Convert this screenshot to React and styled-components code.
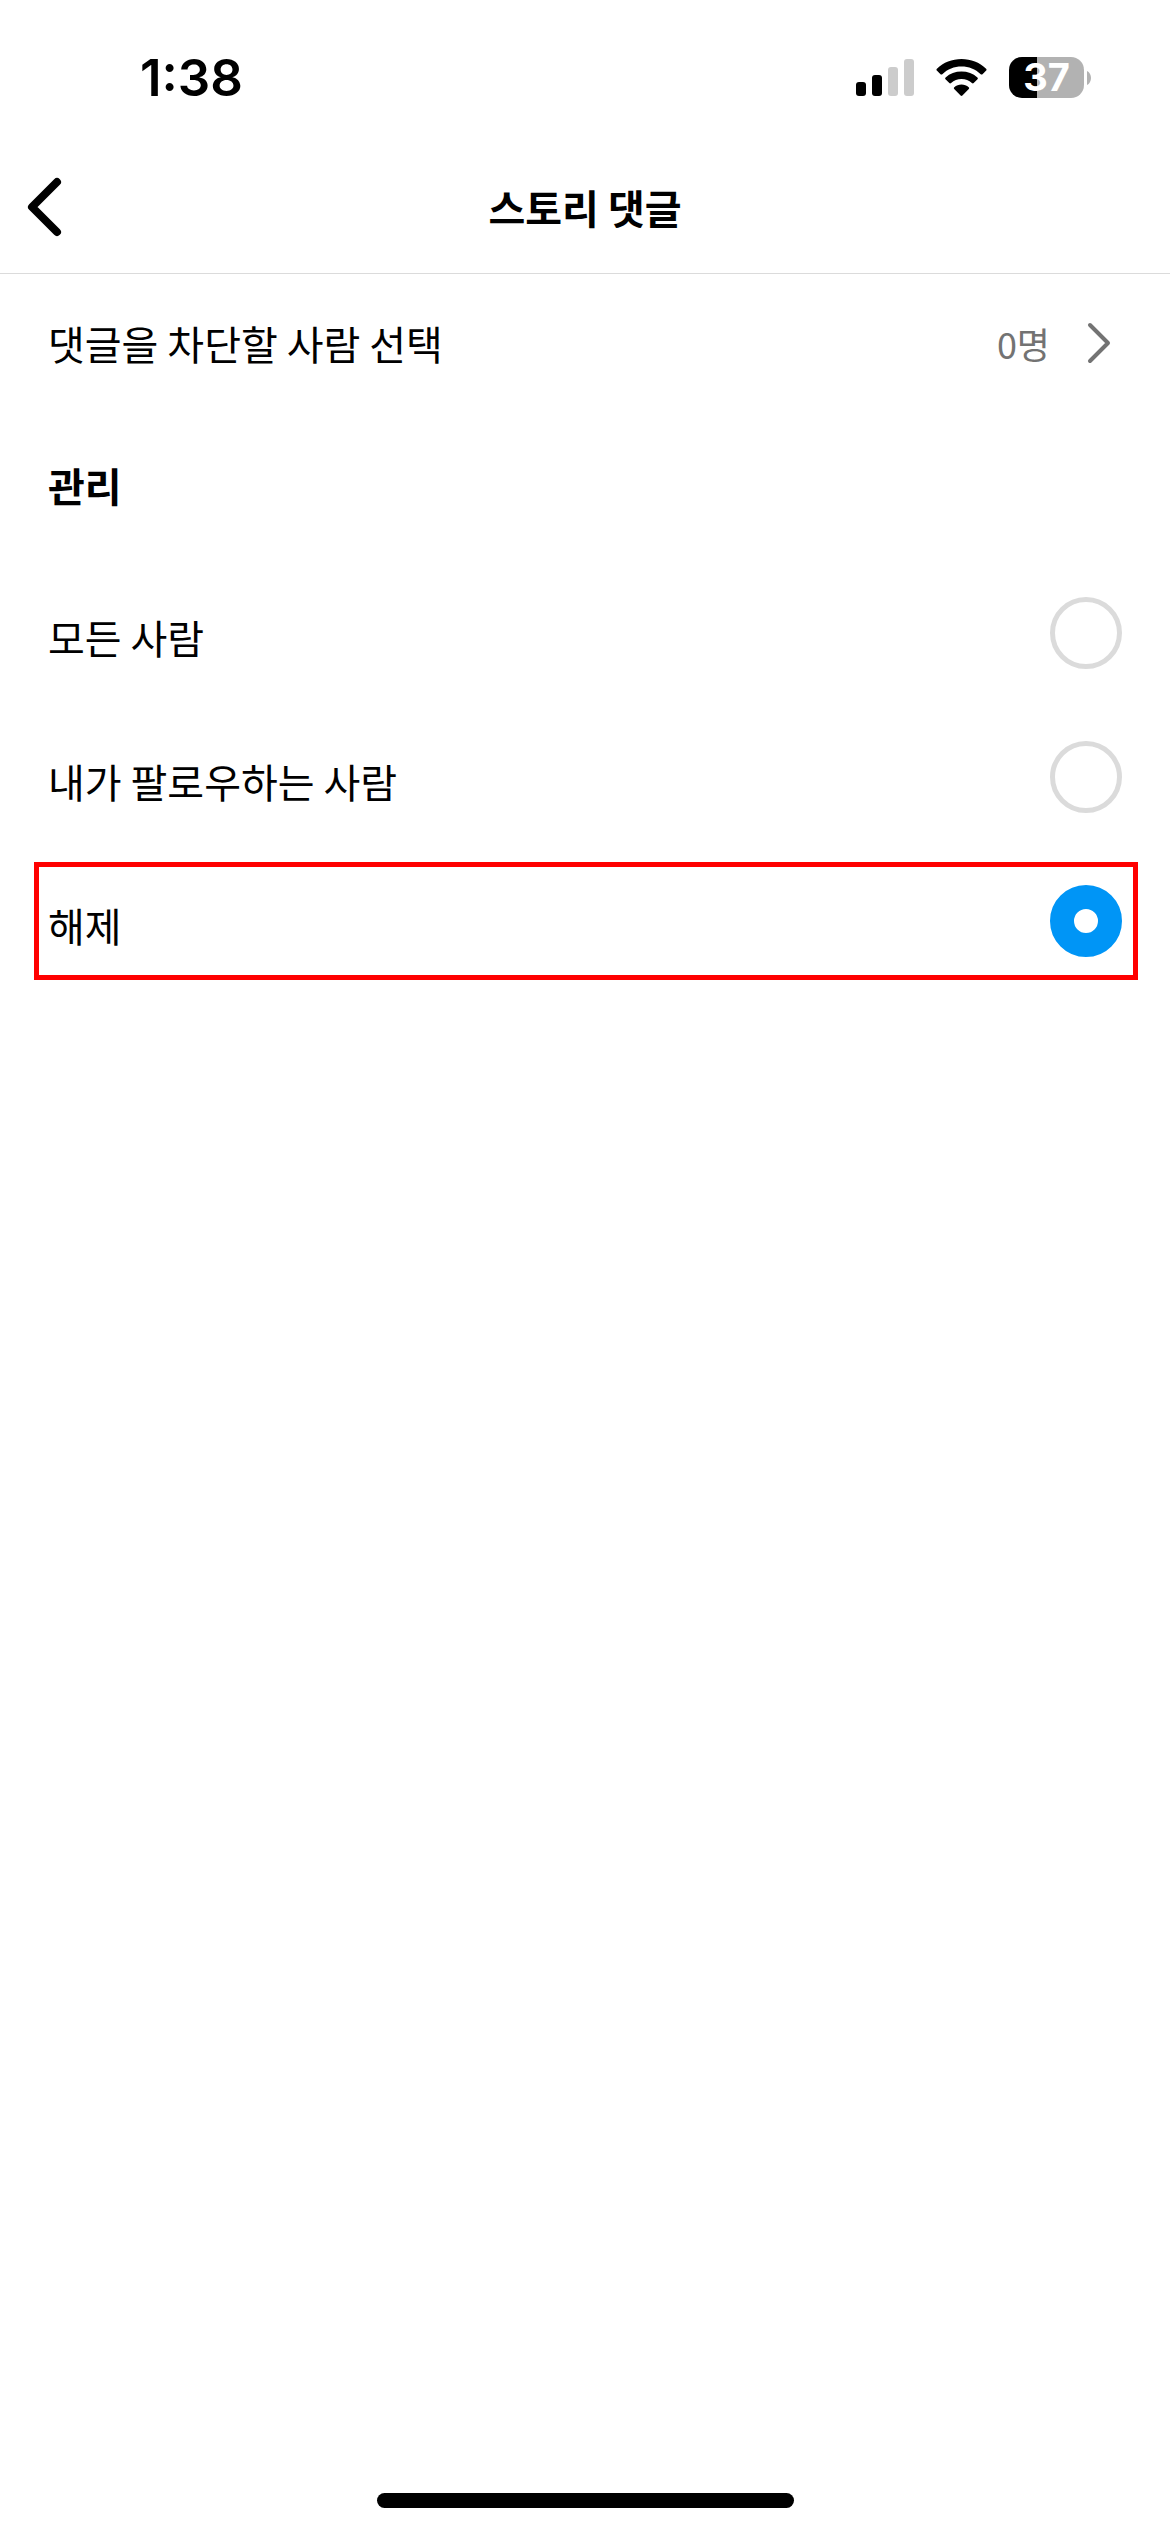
import React, { useState } from 'react'
import styled, { createGlobalStyle } from 'styled-components';

const options = [
  { id: 'everyone', label: '모든 사람' },
  { id: 'following', label: '내가 팔로우하는 사람' },
  { id: 'off', label: '해제', marked: true },
]

const SignalIcon = () => (
  <svg width="58" height="38" viewBox="0 0 58 38" aria-hidden="true">
    <rect x="0" y="23" width="10" height="14" rx="3" fill="#000" />
    <rect x="16" y="16" width="10" height="21" rx="3" fill="#000" />
    <rect x="32" y="8" width="10" height="29" rx="3" fill="#ccc" />
    <rect x="48" y="0" width="10" height="37" rx="3" fill="#ccc" />
  </svg>
)

const WifiIcon = () => (
  <svg width="51" height="38" viewBox="0 0 51 38" aria-hidden="true">
    <path d="M.9 9.700C7.500 3.400 16 0 25.500 0s18 3.400 24.600 9.700c.6.6.6 1.300.1 1.800l-3.700 3.700c-.5.5-1.200.5-1.800 0C39.400 10.100 32.800 7.500 25.500 7.500S11.600 10.100 6.300 15.200c-.6.5-1.300.5-1.800 0L.8 11.500c-.5-.5-.5-1.200.1-1.800z" />
    <path d="M9.600 18.400c4.300-3.800 9.800-5.800 15.900-5.800s11.600 2 15.900 5.800c.6.6.6 1.300.1 1.800l-3.800 3.800c-.5.5-1.200.5-1.800 0-2.900-2.500-6.400-3.900-10.400-3.900S18 21.500 15.100 24c-.6.5-1.300.5-1.800 0l-3.800-3.800c-.5-.5-.5-1.200.1-1.800z" />
    <path d="M18.300 28.300c2-1.700 4.500-2.700 7.200-2.700s5.200 1 7.200 2.700c.6.5.6 1.200.1 1.700l-6.400 6.500c-.5.5-1.300.5-1.800 0L18.200 30c-.5-.5-.5-1.200.1-1.700z" />
  </svg>
)

const App = () => {
  const [selected, setSelected] = useState('off')

  return (
    <Page>
      <GlobalStyle />
      <StatusBar>
        <Clock>1:38</Clock>
        <StatusIcons>
          <SignalIcon />
          <WifiIcon />
          <BatteryWrapper>
            <Battery>37</Battery>
            <svg width="4" height="14" viewBox="0 0 4 14" aria-hidden="true">
              <path d="M0 0c2.400 1.100 4 3.800 4 7s-1.600 5.900-4 7z" fill="#b2b2b2" />
            </svg>
          </BatteryWrapper>
        </StatusIcons>
      </StatusBar>

      <Header>
        <BackButton type="button" aria-label="뒤로">
          <svg width="36" height="60" viewBox="0 0 36 60" fill="none" stroke="#000" strokeWidth="8" strokeLinecap="round" strokeLinejoin="round">
            <path d="M30 5 5 30l25 25" />
          </svg>
        </BackButton>
        <Title>스토리 댓글</Title>
      </Header>

      <main>
        <LinkRow href="#blocked">
          <span>댓글을 차단할 사람 선택</span>
          <RowEnd>
            <Count>0명</Count>
            <svg width="36" height="44" viewBox="0 0 36 44" fill="none" stroke="#737373" strokeWidth="4" strokeLinecap="round" strokeLinejoin="round" aria-hidden="true">
              <path d="M4 4l18 18L4 40" />
            </svg>
          </RowEnd>
        </LinkRow>

        <SectionTitle id="manage">관리</SectionTitle>
        <div role="radiogroup" aria-labelledby="manage">
          {options.map(({ id, label, marked }) => (
            <OptionRow key={id} $marked={marked}>
              <OptionLabel htmlFor={id}>{label}</OptionLabel>
              <Radio
                id={id}
                type="radio"
                name="storyComments"
                checked={selected === id}
                onChange={() => setSelected(id)}
              />
            </OptionRow>
          ))}
        </div>
      </main>

      <HomeIndicator />
    </Page>
  )
}

const GlobalStyle = createGlobalStyle`
  *, *::before { box-sizing: border-box; }
  body {
    margin: 0;
    background: #fff;
    color: #000;
    font-family: 'Noto Sans CJK KR', sans-serif;
    font-size: 40px;
    line-height: 60px;
  }
  svg { display: block; flex-shrink: 0; }
`

const Page = styled.div`
  display: flex;
  flex-direction: column;
  min-height: 100vh;
`

const StatusBar = styled.div`
  display: flex;
  align-items: center;
  justify-content: space-between;
  height: 141px;
  padding: 14px 79px 0 140px;
  font-family: Inter, sans-serif;
`

const Clock = styled.span`
  font-size: 51px;
  font-weight: 600;
`

const StatusIcons = styled.div`
  display: flex;
  align-items: center;
  gap: 22px;
`

const BatteryWrapper = styled.div`
  display: flex;
  align-items: center;
  gap: 3px;
`

const Battery = styled.span`
  width: 75px;
  height: 41px;
  border-radius: 13px;
  background: linear-gradient(to right, #000 28px, #b2b2b2 28px);
  color: #fff;
  font-size: 38px;
  font-weight: 700;
  line-height: 41px;
  text-align: center;
`

const Header = styled.header`
  display: grid;
  grid-template-columns: 1fr auto 1fr;
  align-items: center;
  height: 132px;
  padding: 0 27px;
  box-shadow: 0 1px 0 #dbdbdb;
`

const BackButton = styled.button`
  justify-self: start;
  padding: 0;
  border: 0;
  background: none;
  cursor: pointer;
`

const Title = styled.h1`
  margin: 0;
  font-size: 40px;
  font-weight: 700;
`

const LinkRow = styled.a`
  display: flex;
  align-items: center;
  justify-content: space-between;
  height: 140px;
  padding: 0 48px;
  color: inherit;
  text-decoration: none;
`

const RowEnd = styled.span`
  display: flex;
  align-items: center;
  gap: 36px;
`

const Count = styled.span`
  color: #737373;
  font-size: 36px;
`

const SectionTitle = styled.h2`
  margin: 0;
  padding: 42px 48px 46px;
  font-size: 40px;
  font-weight: 700;
`

const OptionRow = styled.div`
  position: relative;
  display: flex;
  align-items: center;
  justify-content: space-between;
  height: 144px;
  padding: 0 48px;

  /* highlight frame drawn over the row */
  ${({ $marked }) => $marked && `
    &::before {
      content: '';
      position: absolute;
      inset: 13px 32px 13px 34px;
      border: 5px solid #f00;
      pointer-events: none;
    }
  `}
`

const OptionLabel = styled.label`
  flex: 1;
  padding-top: 8px;
  cursor: pointer;
`

const Radio = styled.input`
  appearance: none;
  width: 72px;
  height: 72px;
  margin: 0;
  border: 5px solid #dbdbdb;
  border-radius: 50%;
  background: #fff;
  cursor: pointer;

  &:checked { border: 24px solid #0095f6; }
`

const HomeIndicator = styled.div`
  width: 417px;
  height: 15px;
  margin: auto auto 24px;
  border-radius: 8px;
  background: #000;
`

export default App;
